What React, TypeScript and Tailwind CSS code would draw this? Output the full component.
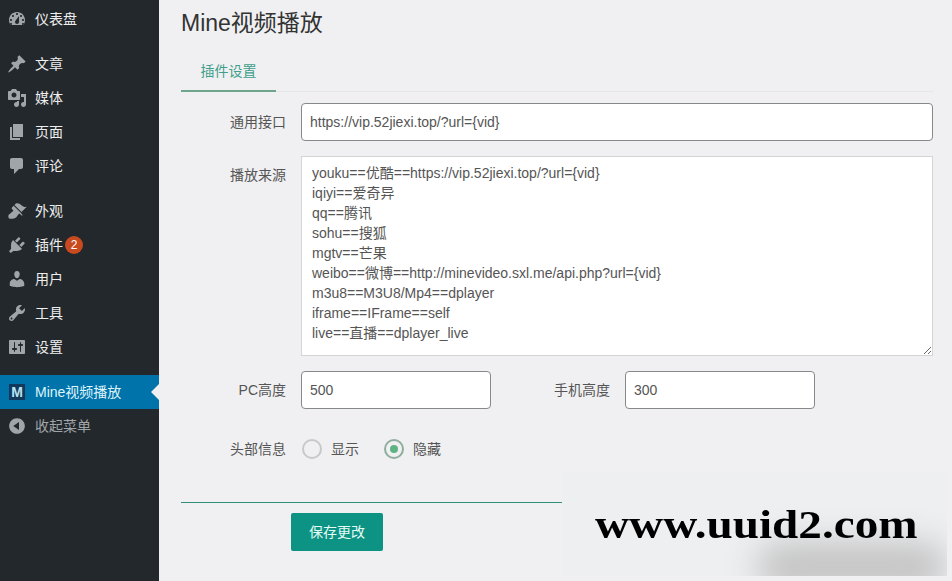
const FONT = 'font-["Liberation_Sans","Noto_Sans_CJK_SC",sans-serif]'

const icons = {
  dashboard: 'M3.76 16h12.48c1.1-1.37 1.76-3.11 1.76-5 0-4.42-3.58-8-8-8s-8 3.58-8 8c0 1.89.66 3.63 1.76 5zM10 4c.55 0 1 .45 1 1s-.45 1-1 1-1-.45-1-1 .45-1 1-1zM6 6c.55 0 1 .45 1 1s-.45 1-1 1-1-.45-1-1 .45-1 1-1zm8 0c.55 0 1 .45 1 1s-.45 1-1 1-1-.45-1-1 .45-1 1-1zm-5.37 5.55L12 7v6c0 1.1-.9 2-2 2s-2-.9-2-2c0-.57.24-1.08.63-1.45zM4 10c.55 0 1 .45 1 1s-.45 1-1 1-1-.45-1-1 .45-1 1-1zm12 0c.55 0 1 .45 1 1s-.45 1-1 1-1-.45-1-1 .45-1 1-1zm-12 4c.55 0 1 .45 1 1s-.45 1-1 1-1-.45-1-1 .45-1 1-1zm12 0c.55 0 1 .45 1 1s-.45 1-1 1-1-.45-1-1 .45-1 1-1z',
  post: 'M10.44 3.02l1.82-1.82 6.36 6.35-1.83 1.82c-1.05-.68-2.48-.57-3.41.36l-.75.75c-.92.93-1.04 2.35-.35 3.41l-1.83 1.82-2.41-2.41-2.8 2.79c-.42.42-3.38 2.71-3.8 2.29s1.86-3.39 2.28-3.81l2.79-2.79L4.1 9.36l1.83-1.82c1.05.69 2.48.57 3.4-.36l.75-.75c.93-.92 1.05-2.35.36-3.41z',
  media: 'M13 11V4c0-.55-.45-1-1-1h-1.67L9 1H5L3.67 3H2c-.55 0-1 .45-1 1v7c0 .55.45 1 1 1h10c.55 0 1-.45 1-1zM7 4.5c1.38 0 2.5 1.12 2.5 2.5S8.38 9.5 7 9.5 4.5 8.38 4.5 7 5.62 4.5 7 4.5zM14 6h5v10.5c0 1.38-1.12 2.5-2.5 2.5S14 17.88 14 16.5s1.12-2.5 2.5-2.5c.17 0 .34.02.5.05V9h-3V6zm-4 8.05V13h2v3.5c0 1.38-1.12 2.5-2.5 2.5S7 17.88 7 16.5 8.12 14 9.5 14c.17 0 .34.02.5.05z',
  page: 'M6 15V2h10v13H6zm-1 1h8v2H3V5h2v11z',
  comment: 'M5 2h9c1.1 0 2 .9 2 2v7c0 1.1-.9 2-2 2h-2l-5 5v-5H5c-1.1 0-2-.9-2-2V4c0-1.1.9-2 2-2z',
  appearance: 'M14.48 11.06L7.41 3.99l1.5-1.5c.5-.56 2.3-.47 3.51.32 1.21.8 1.43 1.28 2.91 2.1 1.18.64 2.45 1.26 4.45.85zm-.71.71L6.7 4.7 4.93 6.47c-.39.39-.39 1.02 0 1.41l1.06 1.06c.39.39.39 1.03 0 1.42-.6.6-1.43 1.11-2.21 1.69-.35.26-.7.53-1.01.84C1.43 13.23.91 15.24 1.76 17.19c.7.63 1.76.63 2.3.63 1.95-.04 3.99-.34 5.17-1.53.31-.31.58-.66.84-1.01.58-.78 1.09-1.61 1.69-2.21.39-.39 1.02-.39 1.41 0l1.06 1.06c.39.39 1.02.39 1.41 0z',
  plugin: 'M13.11 4.36L9.87 7.6 8 5.73l3.24-3.24c.35-.34 1.05-.2 1.56.32.52.51.66 1.21.31 1.55zm-8 1.77l.91-1.12 9.01 9.01-1.19.84c-.71.71-2.63 1.16-3.82 1.16H6.14L4.9 17.26c-.59.59-1.54.59-2.12 0-.59-.58-.59-1.53 0-2.12l1.24-1.24v-3.88c0-1.13.4-3.19 1.09-3.89zm7.26 3.97l3.24-3.24c.34-.35 1.04-.21 1.55.31.52.51.66 1.21.31 1.55l-3.24 3.25z',
  users: 'M10 9.25c-2.27 0-2.73-3.44-2.73-3.44C7 4.02 7.82 2 9.97 2c2.16 0 2.98 2.02 2.71 3.81 0 0-.41 3.44-2.68 3.44zm0 2.57L12.72 10c2.39 0 4.52 2.33 4.52 4.53v2.49s-3.65 1.13-7.24 1.13c-3.65 0-7.24-1.13-7.24-1.13v-2.49c0-2.25 1.94-4.48 4.47-4.48z',
  tools: 'M16.68 9.77c-1.34 1.34-3.3 1.67-4.95.99l-5.41 6.52c-.99.99-2.59.99-3.58 0s-.99-2.59 0-3.57l6.52-5.42c-.68-1.65-.35-3.61.99-4.95 1.28-1.28 3.12-1.62 4.72-1.06l-2.89 2.89 2.82 2.82 2.86-2.87c.53 1.58.18 3.39-1.08 4.65zM3.81 16.21c.4.39 1.04.39 1.43 0 .4-.4.4-1.04 0-1.43-.39-.4-1.03-.4-1.43 0-.39.39-.39 1.03 0 1.43z',
  settings: 'M18 16V4c0-.55-.45-1-1-1H3c-.55 0-1 .45-1 1v12c0 .55.45 1 1 1h14c.55 0 1-.45 1-1zM8 11h1c.55 0 1 .45 1 1s-.45 1-1 1H8v1.5c0 .28-.22.5-.5.5s-.5-.22-.5-.5V13H6c-.55 0-1-.45-1-1s.45-1 1-1h1V5.5c0-.28.22-.5.5-.5s.5.22.5.5V11zm5-2h-1c-.55 0-1-.45-1-1s.45-1 1-1h1V5.5c0-.28.22-.5.5-.5s.5.22.5.5V7h1c.55 0 1 .45 1 1s-.45 1-1 1h-1v5.5c0 .28-.22.5-.5.5s-.5-.22-.5-.5V9z',
  collapse: 'M10 2.16c4.33 0 7.84 3.51 7.84 7.84s-3.51 7.84-7.84 7.84S2.16 14.33 2.16 10 5.71 2.16 10 2.16zm2 11.72V6.12L6.18 9.97z',
}

function Dashicon({ d }: { d: string }) {
  return (
    <svg viewBox="0 0 20 20" className="w-5 h-5 shrink-0 fill-[#a0a5aa]">
      <path d={d} />
    </svg>
  )
}

function MenuItem({ icon, label, badge }: { icon: string; label: string; badge?: string }) {
  return (
    <div className="flex items-center h-[34px] pl-[7px] text-[14px] text-[#eeeeee]">
      <Dashicon d={icon} />
      <span className="ml-2">{label}</span>
      {badge && (
        <span className="ml-0.5 w-[18px] h-[18px] rounded-full bg-[#ca4a1f] text-white text-[12px] flex items-center justify-center">
          {badge}
        </span>
      )}
    </div>
  )
}

function Sidebar() {
  return (
    <aside className="w-[159px] shrink-0 bg-[#23282d] pt-0.5">
      <MenuItem icon={icons.dashboard} label="仪表盘" />
      <div className="mt-[11px]">
        <MenuItem icon={icons.post} label="文章" />
        <MenuItem icon={icons.media} label="媒体" />
        <MenuItem icon={icons.page} label="页面" />
        <MenuItem icon={icons.comment} label="评论" />
      </div>
      <div className="mt-[11px]">
        <MenuItem icon={icons.appearance} label="外观" />
        <MenuItem icon={icons.plugin} label="插件" badge="2" />
        <MenuItem icon={icons.users} label="用户" />
        <MenuItem icon={icons.tools} label="工具" />
        <MenuItem icon={icons.settings} label="设置" />
      </div>
      <div className="relative flex items-center h-[34px] mt-[11px] pl-[9px] bg-[#0073aa] text-[14px] text-[#dff4fb]">
        <span className="w-4 h-4 bg-[#12395b] text-[#b9e3f2] text-[14px] font-bold leading-4 text-center">M</span>
        <span className="ml-2.5">Mine视频播放</span>
        <span className="absolute right-0 top-[9px] border-y-8 border-r-8 border-y-transparent border-r-[#f0f0f2]" />
      </div>
      <div className="flex items-center h-[34px] pl-[7px] text-[14px] text-[#a0a5aa]">
        <Dashicon d={icons.collapse} />
        <span className="ml-2">收起菜单</span>
      </div>
    </aside>
  )
}

function Row({ label, className, children }: { label: string; className?: string; children: React.ReactNode }) {
  return (
    <div className={`flex ${className ?? ''}`}>
      <label className="w-[105px] shrink-0 text-right text-[14px] text-[#555] leading-[38px]">{label}</label>
      <div className="ml-[15px] flex-1">{children}</div>
    </div>
  )
}

const inputCls = 'h-[38px] px-2 bg-white border border-[#85898c] rounded text-[14px] text-[#555] outline-none'

const sources = `youku==优酷==https://vip.52jiexi.top/?url={vid}
iqiyi==爱奇异
qq==腾讯
sohu==搜狐
mgtv==芒果
weibo==微博==http://minevideo.sxl.me/api.php?url={vid}
m3u8==M3U8/Mp4==dplayer
iframe==IFrame==self
live==直播==dplayer_live`

function Radio({ label, checked }: { label: string; checked?: boolean }) {
  return (
    <span className="flex items-center gap-[9px] text-[14px] text-[#555]">
      <span
        className={`w-5 h-5 rounded-full border-2 flex items-center justify-center ${checked ? 'border-[#8fae9d]' : 'border-[#c8c8c8]'}`}
      >
        {checked && <span className="w-2 h-2 rounded-full bg-[#5fb283]" />}
      </span>
      {label}
    </span>
  )
}

export default function App() {
  return (
    <div className={`relative flex h-[581px] overflow-hidden bg-[#f0f0f2] ${FONT}`}>
      <Sidebar />
      <main className="flex-1 pl-[22px] pr-[19px]">
        <h1 className="text-[23px] leading-[30px] mt-2 text-[#333]">Mine视频播放</h1>
        <div className="mt-[15px] border-b border-[#e6e6e8] h-[39px]">
          <div className="w-[95px] h-[39px] border-b-2 border-[#6fa58c] text-center text-[14px] leading-[36px] text-[#3f9f8a]">
            插件设置
          </div>
        </div>
        <Row label="通用接口" className="mt-[11px]">
          <input className={`${inputCls} w-full`} defaultValue="https://vip.52jiexi.top/?url={vid}" />
        </Row>
        <Row label="播放来源" className="mt-[15px]">
          <textarea
            className="block w-full h-[200px] pl-[10px] pt-[6px] bg-white border border-[#d4d4d6] text-[14px] leading-5 text-[#555] outline-none"
            defaultValue={sources}
          />
        </Row>
        <Row label="PC高度" className="mt-[15px]">
          <div className="flex items-center">
            <input className={`${inputCls} w-[190px]`} defaultValue="500" />
            <label className="w-[119px] text-right text-[14px] text-[#555]">手机高度</label>
            <input className={`${inputCls} w-[190px] ml-[15px]`} defaultValue="300" />
          </div>
        </Row>
        <Row label="头部信息" className="mt-[21px]">
          <div className="flex items-center h-[38px] gap-[25px] pl-px">
            <Radio label="显示" />
            <Radio label="隐藏" checked />
          </div>
        </Row>
        <div className="mt-[34px] border-t border-[#2f8f78]" />
        <button className="block mt-[10px] ml-[110px] w-[92px] h-[38px] bg-[#0d9384] rounded-[2px] text-[14px] text-[#e6fbf6]">
          保存更改
        </button>
      </main>

      {/* watermark patch over the page */}
      <div className="absolute left-[562px] top-[472px] w-[385px] h-[104px] overflow-hidden bg-[#eeeff1]">
        <div className="absolute left-[195px] top-[70px] w-[190px] h-[50px] rounded-full bg-[#c4c4c4] blur-[16px]" />
        <span className='absolute left-[33px] top-[31px] origin-left scale-x-[1.18] font-["Liberation_Serif",serif] font-bold text-[40px] leading-[44px] text-black whitespace-nowrap'>
          www.uuid2.com
        </span>
      </div>
    </div>
  )
}
